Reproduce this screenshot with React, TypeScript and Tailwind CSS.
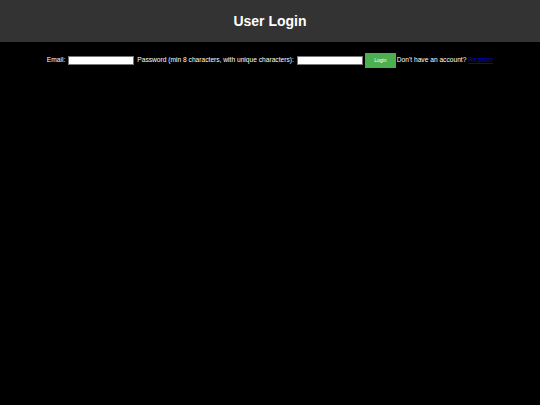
export default function App() {
  return (
    <div
      className="min-h-[405px] w-full bg-black text-white"
      style={{ fontFamily: '"Liberation Sans", Arial, sans-serif' }}
    >
      {/* Header */}
      <header className="flex h-[42px] items-center justify-center bg-[#333333]">
        <h1 className="text-[14px] font-bold leading-none">User Login</h1>
      </header>

      {/* Login form */}
      <form className="mt-[11px] flex items-center justify-center text-[6.65px] leading-none">
        <label htmlFor="email">Email:</label>
        <input
          id="email"
          type="email"
          className="ml-[3px] h-[9px] w-[66px] border border-[#767676] bg-white"
        />
        <label htmlFor="password" className="ml-[3px]">
          Password (min 8 characters, with unique characters):
        </label>
        <input
          id="password"
          type="password"
          className="ml-[3px] h-[9px] w-[66px] border border-[#767676] bg-white"
        />
        <button
          type="button"
          className="ml-[2px] h-[15px] w-[31px] bg-[#4caf50] text-[5px] text-white"
        >
          Login
        </button>
        <span className="ml-[1px]">Don't have an account?</span>
        <a href="#" className="ml-[2px] text-[#0000ee] underline">
          Register
        </a>
      </form>
    </div>
  );
}
